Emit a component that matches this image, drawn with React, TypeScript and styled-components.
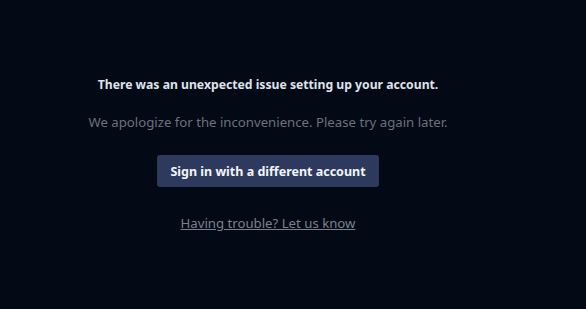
import React from "react";
import styled, { createGlobalStyle } from "styled-components";

const Global = createGlobalStyle`
  html, body { margin: 0; padding: 0; background: #030a16; }
  body { font-family: "Noto Sans", "Open Sans", sans-serif; }
`;

const Page = styled.div`
  width: 586px;
  height: 309px;
  box-sizing: border-box;
  padding: 75px 50px 0 0;
  display: flex;
  flex-direction: column;
  align-items: center;
`;

const Title = styled.h1`
  margin: 0;
  font-size: 12.2px;
  font-weight: 700;
  color: #dfe3ea;
  line-height: 20px;
`;

const Subtitle = styled.p`
  margin: 17px 0 0;
  font-size: 13.2px;
  color: #6b717d;
  line-height: 20px;
`;

const Button = styled.button`
  margin-top: 23px;
  height: 32px;
  width: 222px;
  border: none;
  border-radius: 3px;
  background: #2d3a5e;
  color: #f3f5f9;
  font-family: inherit;
  font-size: 12.5px;
  font-weight: 700;
`;

const HelpLink = styled.a`
  margin-top: 27px;
  font-size: 13.2px;
  color: #7a808b;
  text-decoration: underline;
  line-height: 18px;
`;

export default function App() {
  return (
    <>
      <Global />
      <Page>
        <Title>There was an unexpected issue setting up your account.</Title>
        <Subtitle>We apologize for the inconvenience. Please try again later.</Subtitle>
        <Button>Sign in with a different account</Button>
        <HelpLink href="#">Having trouble? Let us know</HelpLink>
      </Page>
    </>
  );
}
